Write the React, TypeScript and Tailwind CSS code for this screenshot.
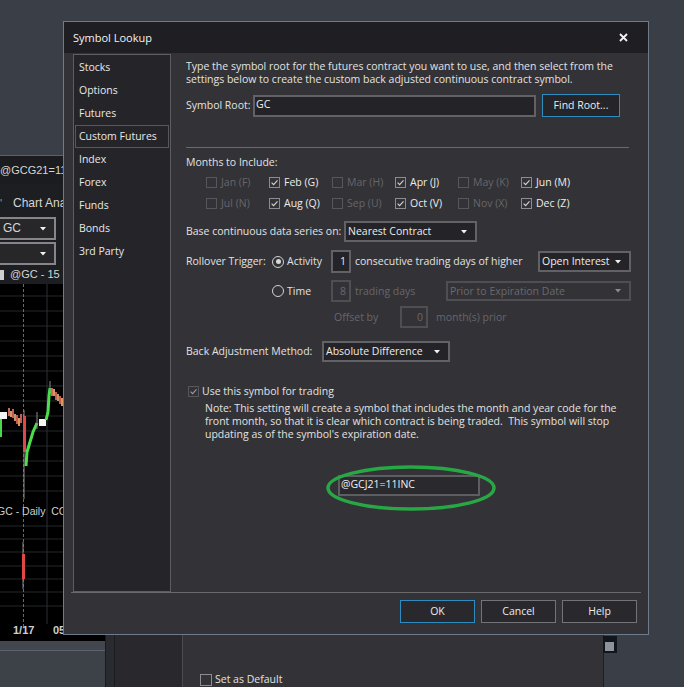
import React from "react";

type Month = [string, boolean];

const months: Month[] = [
  ["Jan (F)", false],
  ["Feb (G)", true],
  ["Mar (H)", false],
  ["Apr (J)", true],
  ["May (K)", false],
  ["Jun (M)", true],
  ["Jul (N)", false],
  ["Aug (Q)", true],
  ["Sep (U)", false],
  ["Oct (V)", true],
  ["Nov (X)", false],
  ["Dec (Z)", true],
];

const sideItems = [
  "Stocks",
  "Options",
  "Futures",
  "Custom Futures",
  "Index",
  "Forex",
  "Funds",
  "Bonds",
  "3rd Party",
];

const CheckBox = ({ checked, disabled }: { checked?: boolean; disabled?: boolean }) => (
  <span
    className={`flex h-[11px] w-[11px] shrink-0 items-center justify-center border ${
      disabled ? "border-[#57565b]" : "border-[#8d8c91]"
    }`}
  >
    {checked && (
      <svg width="9" height="9" viewBox="0 0 9 9">
        <path
          d="M1.6 4.6l2 2 3.9-4.3"
          fill="none"
          stroke={disabled ? "#9a999e" : "#d4d4d4"}
          strokeWidth="1.1"
        />
      </svg>
    )}
  </span>
);

const Radio = ({ on }: { on?: boolean }) => (
  <span className="flex h-[12px] w-[12px] shrink-0 items-center justify-center rounded-full border border-[#d2d2d2]">
    {on && <span className="h-[5px] w-[5px] rounded-full bg-[#d8d8d8]" />}
  </span>
);

const Caret = ({ dim }: { dim?: boolean }) => (
  <svg width="6" height="4" viewBox="0 0 6 4">
    <path d="M0 0h6L3 3.5z" fill={dim ? "#8c8b90" : "#f2f2f2"} />
  </svg>
);

const Select = ({
  className,
  label,
  disabled,
}: {
  className: string;
  label: string;
  disabled?: boolean;
}) => (
  <div
    className={`flex items-center justify-between border-2 pl-[2px] pr-[8px] ${
      disabled
        ? "border-[#4f4e53] bg-[#333236] text-[#6a696e]"
        : "border-[#626166] bg-[#242327] text-[#ececec]"
    } ${className}`}
  >
    <span>{label}</span>
    <Caret dim={disabled} />
  </div>
);

const NumBox = ({
  value,
  className,
  disabled,
}: {
  value: string;
  className: string;
  disabled?: boolean;
}) => (
  <div
    className={`flex items-center justify-end border-2 pr-[3px] ${
      disabled
        ? "border-[#4f4e53] bg-[#333236] text-[#6a696e]"
        : "border-[#626166] bg-[#242327] text-[#ececec]"
    } ${className}`}
  >
    {value}
  </div>
);

const Btn = ({
  label,
  primary,
  className = "w-[75px]",
}: {
  label: string;
  primary?: boolean;
  className?: string;
}) => (
  <div
    className={`flex h-[23px] items-center justify-center border bg-[#29282c] text-[#ececec] ${
      primary ? "border-[#2f8cc0]" : "border-[#747378]"
    } ${className}`}
  >
    {label}
  </div>
);

const ChartWindow = () => (
  <div className="absolute left-0 top-[155px] flex h-[486px] w-[105px] flex-col border-t border-[#5b616a] bg-[#1c1e22] font-['Liberation_Sans',sans-serif] text-[11px] text-[#d6d6d6]">
    <div className="flex h-[28px] w-[63px] items-center overflow-hidden whitespace-nowrap bg-[#1a1c20]">
      @GCG21=11INC
    </div>
    <div className="flex h-[33px] w-[63px] items-center overflow-hidden whitespace-nowrap pt-[5px]">
      <span className="w-[13px] shrink-0 text-[#9a9a9a]">'</span>
      <span className="text-[12px]">Chart Ana</span>
    </div>
    <div className="-ml-[4px] flex h-[23px] w-[60px] items-center justify-between border-2 border-[#85858a] bg-[#27272a] pl-[5px] pr-[8px] text-[12px]">
      <span>GC</span>
      <Caret />
    </div>
    <div className="-ml-[4px] mt-[2px] flex h-[23px] w-[60px] items-center justify-end border-2 border-[#85858a] bg-[#27272a] pr-[8px]">
      <Caret />
    </div>
    <div className="flex h-[19px] w-[63px] items-center overflow-hidden whitespace-nowrap">
      <span className="mr-[6px] h-[10px] w-[4px] shrink-0 bg-[#cfcfcf]" />
      @GC - 15
    </div>
    <div className="relative flex-1 bg-black">
      <svg width="105" height="356" viewBox="0 0 105 356" className="block">
        {[12, 27, 42, 57, 72, 87, 102, 117, 132, 147, 162, 177, 192, 207].map((y) => (
          <line key={y} x1="0" x2="105" y1={y} y2={y} stroke="#23262b" />
        ))}
        {[242, 255, 268, 282, 295, 308, 322].map((y) => (
          <line key={y} x1="0" x2="105" y1={y} y2={y} stroke="#23262b" />
        ))}
        <line x1="47" x2="47" y1="0" y2="340" stroke="#2b2e34" />
        <line x1="23.5" x2="23.5" y1="0" y2="345" stroke="#6a6a6a" strokeDasharray="3 2" />
        <rect x="0" y="135" width="2" height="18" fill="#4bd84b" />
        <rect x="0" y="128" width="7" height="7" fill="#f4f4f4" />
        {[
          [8, 124, 8, "#c86a55"],
          [10, 127, 6, "#d69a5a"],
          [12, 125, 9, "#c85a52"],
          [14, 130, 7, "#b99a6a"],
          [16, 131, 9, "#c85a52"],
          [18, 134, 8, "#d69a5a"],
          [20, 130, 9, "#c85a52"],
        ].map(([x, y, h, c]) => (
          <rect key={x as number} x={x as number} y={y as number} width="2" height={h as number} fill={c as string} />
        ))}
        <line x1="24" x2="24" y1="126" y2="215" stroke="#8a8a8a" />
        <rect x="23" y="132" width="3" height="36" fill="#e04848" />
        <polyline points="26,182 27,168 30,158 33,148 37,139" fill="none" stroke="#4be04b" strokeWidth="3" />
        <line x1="37" x2="37" y1="128" y2="145" stroke="#8a8a8a" />
        <rect x="39" y="135" width="7" height="7" fill="#f4f4f4" />
        <polyline points="46,136 48,128 49,112 50,104" fill="none" stroke="#4be04b" strokeWidth="3" />
        <line x1="50" x2="50" y1="97" y2="108" stroke="#8a8a8a" />
        {[
          [51, 104, 8, "#c86a55"],
          [53, 105, 7, "#d69a5a"],
          [55, 108, 8, "#c85a52"],
          [57, 110, 7, "#b99a6a"],
          [59, 112, 8, "#c85a52"],
          [61, 114, 8, "#d69a5a"],
        ].map(([x, y, h, c]) => (
          <rect key={x as number} x={x as number} y={y as number} width="2" height={h as number} fill={c as string} />
        ))}
        <line x1="23" x2="23" y1="258" y2="305" stroke="#8a8a8a" />
        <rect x="22" y="270" width="3" height="25" fill="#e04848" />
      </svg>
      <span className="absolute -left-[3px] top-[221px] whitespace-nowrap text-[10.5px] text-[#cfcfcf]">
        GC - Daily&nbsp; CC
      </span>
      <span className="absolute left-[13px] top-[340px] text-[11px] font-bold text-[#cfcfcf]">1/17</span>
      <span className="absolute left-[53px] top-[340px] text-[11px] font-bold text-[#cfcfcf]">05</span>
    </div>
  </div>
);

const BackWindow = () => (
  <>
    <div className="absolute left-0 top-[641px] flex h-[46px] w-[105px] flex-col">
      <div className="h-[10px] border-b border-[#5c626a] bg-[#42474f]" />
      <div className="flex-1 bg-[#3d4249]" />
    </div>
    <div className="absolute left-[105px] top-[560px] flex h-[127px] w-[499px]">
      <div className="w-[10px] border-x border-[#1a1b1f] bg-[#2a2b30]" />
      <div className="w-[68px] border-r border-[#4c4b50] bg-[#29282c]" />
      <div className="flex flex-1 items-end border-r border-[#1c1e22] bg-[#333236] pb-[1px] pl-[17px]">
        <div className="flex h-[13px] items-center gap-[3px]">
          <span className="h-[12px] w-[12px] border border-[#8d8c91]" />
          <span>Set as Default</span>
        </div>
      </div>
    </div>
    <div className="absolute left-[603px] top-[636px] h-[17px] w-[14px] bg-[#11161d] pl-[2px] pt-[6px]">
      <div className="h-[9px] w-[9px] bg-[#8e929b]" />
    </div>
  </>
);

const App = () => {
  return (
    <div className="relative h-[687px] w-[684px] overflow-hidden bg-[#3a3f47] font-['Open_Sans',sans-serif] text-[10.5px] leading-[13px] text-[#e2e2e2]">
      <ChartWindow />
      <BackWindow />

      {/* Symbol Lookup dialog */}
      <div className="absolute left-[63px] top-[21px] z-10 flex w-[586px] flex-col border border-[#6f7b88] bg-[#333236]">
        <div className="flex h-[31px] items-center justify-between bg-[#1f1e22] pl-[9px] pr-[20px] text-[11px] text-[#f4f4f4]">
          <span>Symbol Lookup</span>
          <svg width="9" height="9" viewBox="0 0 9 9">
            <path d="M1 1l7 7M8 1l-7 7" stroke="#f4f4f4" strokeWidth="1.8" />
          </svg>
        </div>

        <div className="flex h-[539px] pl-[9px] pt-[1px]">
          <div className="flex w-[98px] flex-col border border-[#5e5d62] bg-[#252428] pt-[1px] text-[#e8e8e8]">
            {sideItems.map((s) => (
              <div
                key={s}
                className={`mx-[1px] flex h-[23px] items-center whitespace-nowrap border pl-[3px] ${
                  s === "Custom Futures" ? "border-[#58575c]" : "border-transparent"
                }`}
              >
                {s}
              </div>
            ))}
          </div>

          <div className="ml-[15px] flex w-[445px] flex-col pt-[6px]">
            <p className="whitespace-nowrap">
              Type the symbol root for the futures contract you want to use, and then select from the
              <br />
              settings below to create the custom back adjusted continuous contract symbol.
            </p>

            <div className="mt-[8px] flex h-[23px] items-center">
              <span className="w-[67px]">Symbol Root:</span>
              <div className="flex h-[22px] w-[283px] items-start border-2 border-[#626166] bg-[#242327] pl-[1px] pt-[1px] text-[#f0f0f0]">
                GC
              </div>
              <Btn label="Find Root..." primary className="ml-[6px] w-[78px] bg-[#252428]" />
            </div>

            <div className="mt-[30px] h-px w-[443px] bg-[#6a696e]" />

            <div className="mt-[8px]">Months to Include:</div>
            <div className="ml-[20px] mt-[3px] grid grid-cols-[63px_63px_63px_63px_63px_63px]">
              {months.map(([m, on]) => (
                <div key={m} className="flex h-[21px] items-center gap-[4px] whitespace-nowrap">
                  <CheckBox checked={on} disabled={!on} />
                  <span className={on ? "text-[#ececec]" : "text-[#67666b]"}>{m}</span>
                </div>
              ))}
            </div>

            <div className="mt-[7px] flex h-[21px] items-center">
              <span className="w-[158px]">Base continuous data series on:</span>
              <Select className="h-[21px] w-[133px]" label="Nearest Contract" />
            </div>

            <div className="mt-[8px] flex h-[23px] items-center whitespace-nowrap">
              <span className="w-[86px]">Rollover Trigger:</span>
              <div className="flex w-[59px] items-center gap-[3px]">
                <Radio on />
                <span>Activity</span>
              </div>
              <NumBox value="1" className="h-[23px] w-[20px]" />
              <span className="ml-[4px] w-[183px]">consecutive trading days of higher</span>
              <Select className="h-[21px] w-[93px]" label="Open Interest" />
            </div>

            <div className="mt-[7px] flex h-[22px] items-center whitespace-nowrap">
              <div className="ml-[86px] flex w-[59px] items-center gap-[3px]">
                <Radio />
                <span>Time</span>
              </div>
              <NumBox value="8" className="h-[22px] w-[20px]" disabled />
              <span className="ml-[4px] w-[91px] text-[#67666b]">trading days</span>
              <Select className="h-[20px] w-[185px]" label="Prior to Expiration Date" disabled />
            </div>

            <div className="mt-[4px] flex h-[22px] items-center whitespace-nowrap text-[#67666b]">
              <span className="ml-[148px] w-[66px]">Offset by</span>
              <NumBox value="0" className="h-[22px] w-[28px]" disabled />
              <span className="ml-[8px]">month(s) prior</span>
            </div>

            <div className="mt-[13px] flex h-[21px] items-center whitespace-nowrap">
              <span className="w-[136px]">Back Adjustment Method:</span>
              <Select className="h-[21px] w-[128px]" label="Absolute Difference" />
            </div>

            <div className="ml-[2px] mt-[23px] flex h-[13px] items-center gap-[3px]">
              <CheckBox checked disabled />
              <span>Use this symbol for trading</span>
            </div>

            <p className="ml-[19px] mt-[4px] whitespace-pre">
              {"Note: This setting will create a symbol that includes the month and year code for the\nfront month, so that it is clear which contract is being traded.  This symbol will stop\nupdating as of the symbol's expiration date."}
            </p>

            <div className="relative ml-[152px] mt-[34px] h-[21px] w-[142px]">
              <div className="h-[21px] w-[142px] border-2 border-[#5e5d62] bg-[#2a292d] pl-[1px] pt-[1px] text-[#f0f0f0]">
                @GCJ21=11INC
              </div>
              <svg
                className="absolute -left-[12px] -top-[10px]"
                width="170"
                height="46"
                viewBox="0 0 170 46"
              >
                <ellipse cx="85" cy="23" rx="83" ry="21" fill="none" stroke="#28a745" strokeWidth="3.5" />
              </svg>
            </div>
          </div>
        </div>

        <div className="mx-[7px] h-px bg-[#6a696e]" />

        <div className="flex justify-end gap-[6px] pb-[11px] pr-[11px] pt-[7px]">
          <Btn label="OK" primary />
          <Btn label="Cancel" />
          <Btn label="Help" />
        </div>
      </div>
    </div>
  );
};

export default App;
